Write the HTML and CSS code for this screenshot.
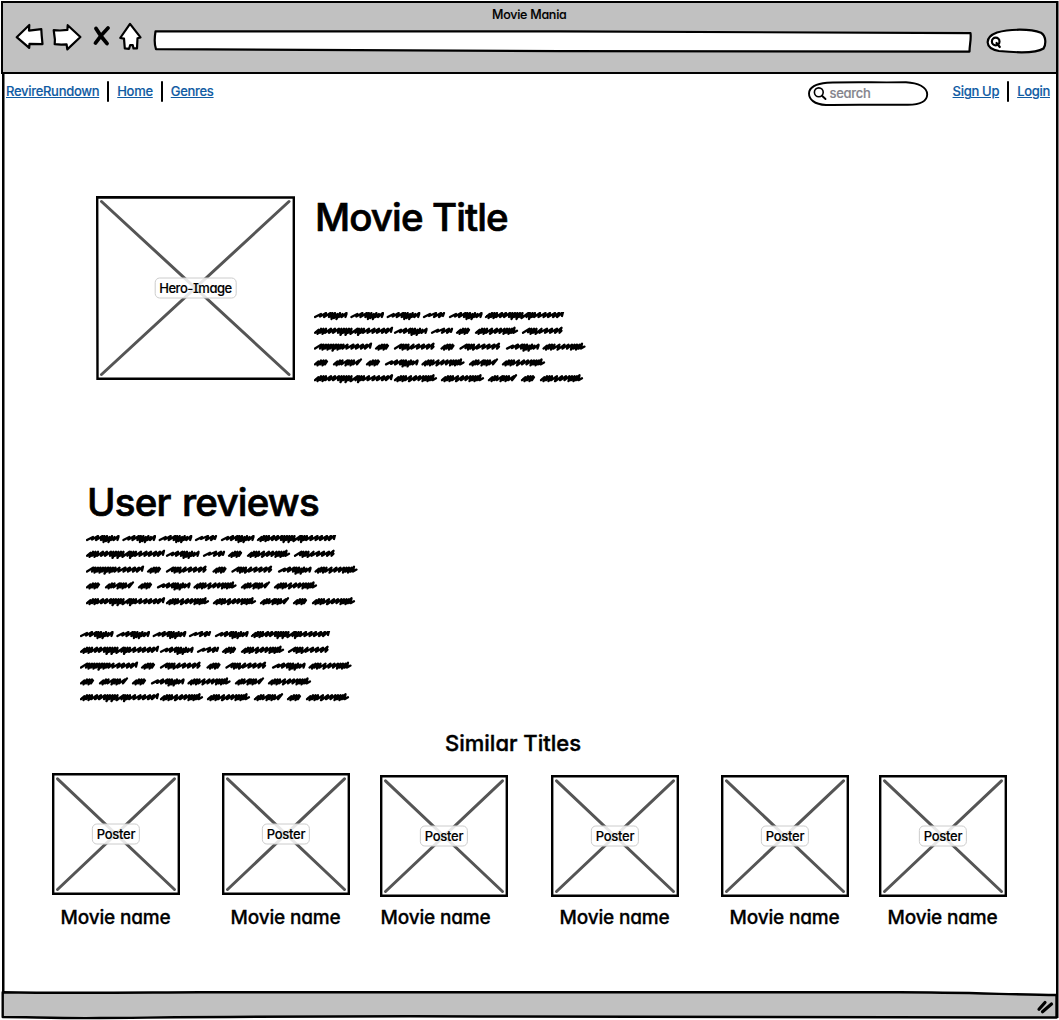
FILE: index.html
```html
<!DOCTYPE html>
<html lang="en">
<head>
<meta charset="utf-8">
<title>Movie Mania</title>
<link rel="stylesheet" href="styles.css">
</head>
<body>
<svg class="defs" width="0" height="0" aria-hidden="true">
  <defs>
    <path id="w14" d="M1 5l3.500-3-1 4 3.500-5-1 4 3.500-4-1 5 3.500-5-1 4 2-3M2 4h8"/>
    <path id="w21" d="M1 5l6-3-1 2 7-3-2 4 7-4-2 4 4-3 1-1-1 3"/>
    <path id="w28" d="M1 5l3.500-3-1 4 3.500-5-1 4 3.500-4-1 4 6-4-2 5 3.500-5-1 4 3.500-4-1 5 3.500-5-1 4 6-4-2 4 4-5M2 4h6M13 4h7"/>
    <path id="w32" d="M1 5l6-3-1 2.500 6-3.500-2 4 6.500-4-1.500 4 3.500-4-1 6 3.500-6-1 5 3.500-4-1 5 3.500-6-1 4 3.500-3-1 3 5-4-1 4 1-3M15 4.500h9"/>
    <path id="w42" d="M1 5l3.500-3-1 4 3.500-5-1 4 3.500-4-1 5 3.500-5-1 4 6-4-2 5 7-5-2 4 6-4-1.500 4 5-4-1 5 3.500-5-1 4 3.500-4-1 5 3.500-5-1 4 3.500-5-1 5 3.500-2M2 4h8M29 4.500h9"/>
    <path id="w42b" d="M1 5l6.500-4-1.500 3.500 3.500-3.500-1 5 3.500-5-1 4 3.500-4-1 5 6-5-2 4 7.500-4-2 4 7-4-2 4 7-4-2 4 6.500-5-2 5 2-2M8 4h7"/>
    <path id="w56" d="M1 5l6.500-4-1.500 4 3.500-4-1 5 3.500-5-1 4 3.500-4-1 5 3.500-5-1 4 3.500-4-1 6 3.500-6-1 4 3.500-4-1 5 3.500-5-1 4 3.500-4-1 4 5-4-1 4 7-4-2 4 6.500-4-2 4 7-4-2 4 6-4-2 4 6-5-1 4M8 4h20"/>
    <path id="w75" d="M1 5l3.500-3-1 4 3.500-5-1 4 3.500-4-1 5 3.500-5-1 4 6-4-2 4 6-4-2 4 6-4-1 4 3.500-4-1 6 3.500-6-1 4 3.500-4-1 6 3.500-6-1 4 3.500-4-1 5 7-5-2 4 3.500-4-1 6 3.500-6-1 4 3.500-4-1 4 6-4-1.500 4 7-4-2 4 6.500-4-2 4 7-4-2 4 6-4-2 4 6-5-1 4M2 4h8M24 4.500h14M44 4.500h6"/>
    <symbol id="scribble" viewBox="0 0 274 74">
      <g fill="none" stroke="#000" stroke-width="2.300" stroke-linecap="round" stroke-linejoin="round">
        <use href="#w32" x="0"/><use href="#w32" x="36.400"/><use href="#w32" x="72.700"/><use href="#w21" x="109"/><use href="#w32" x="135"/><use href="#w75" x="171"/>
        <g transform="translate(0 15.800)"><use href="#w75"/><use href="#w32" x="80"/><use href="#w21" x="117"/><use href="#w14" x="142"/><use href="#w42" x="161"/><use href="#w42b" x="208"/></g>
        <g transform="translate(0 31.600)"><use href="#w56"/><use href="#w14" x="61"/><use href="#w42b" x="80"/><use href="#w14" x="126.500"/><use href="#w42b" x="145.500"/><use href="#w32" x="192"/><use href="#w42" x="228.500"/></g>
        <g transform="translate(0 47.400)"><use href="#w14"/><use href="#w28" x="19"/><use href="#w14" x="52"/><use href="#w32" x="71"/><use href="#w42" x="107.500"/><use href="#w28" x="155"/><use href="#w42" x="188"/></g>
        <g transform="translate(0 63.200)"><use href="#w75"/><use href="#w42" x="80"/><use href="#w42" x="127"/><use href="#w28" x="174"/><use href="#w14" x="207"/><use href="#w42" x="226"/></g>
      </g>
    </symbol>
    <symbol id="poster" viewBox="0 0 128 122">
      <path d="M1.200 1.200H126.800V120.800H1.200Z" fill="#fff" stroke="#000" stroke-width="2.400"/>
      <path d="M5.500 5.800L122.500 116.500M122.500 5.800L5.500 116.500" stroke="#555" stroke-width="3" stroke-linecap="round"/>
    </symbol>
  </defs>
</svg>

<div class="window">
  <header class="chrome">
    <div class="window-title">Movie Mania</div>
    <div class="toolbar">
      <svg class="ink back" width="32" height="30" viewBox="14 22 32 30"><path d="M16.700 37.200L29.300 25l-.3 5.600 12.300-1.400.4 6.300.8 8.600-13-.3-.3 4.100z"/></svg>
      <svg class="ink forward" width="34" height="30" viewBox="50 22 34 30"><path d="M53.700 30.200l6.200.3 7.500-.6.3-4.700L80.400 37 67.300 49.400l-.7-5-5.300.2-6.600-.4.200-4.700z"/></svg>
      <svg class="stop" width="20" height="24" viewBox="92 24 20 24"><path d="M96 28.500Q101 37 107 43.500M108 28Q101 35 95.500 43" fill="none" stroke="#000" stroke-width="3.800" stroke-linecap="round"/></svg>
      <svg class="ink home" width="26" height="32" viewBox="117 21 26 32"><path d="M130 23.800l10.500 13.600-3 .8-.5 10.200h-3.500l-.7-3.200h-2.700l-1 3.600-4.300-.4-.8-9.800-3.800-.6z"/></svg>
      <svg class="ink url" width="822" height="28" viewBox="152 27 822 28"><path d="M155.500 31.400L560 31.300 970.500 33.200C971.400 39 969.500 45 969.500 51.600L560 51.100 156 49.200C153.800 43 154.600 37 155.500 31.400z"/></svg>
      <svg class="ink find" width="64" height="28" viewBox="985 27 64 28"><path d="M997 32.500C1009 29 1030 28.500 1041 32.700 1046.500 36 1046 45 1043.500 48.500 1036 53.500 1014 52.500 999 51 984 48.500 984.500 37 997 32.500z"/><circle cx="995.700" cy="41.500" r="3.800"/><path d="M996.500 43l3.300 4"/></svg>
    </div>
  </header>

  <nav class="nav">
    <a>RevireRundown</a><i class="bar"></i><a>Home</a><i class="bar"></i><a>Genres</a>
    <div class="search">
      <svg width="122" height="26" viewBox="807 81 122 26"><path d="M827 82.700C850 81.700 880 82.700 906 82.200 918 82.800 927.200 87 927.200 94.500 927 101 920 104.700 908 104.700 880 105 850 104.500 826 105 814 104.500 809 99 809 93.500 809 87.500 816 83.500 827 82.700z" fill="#fff" stroke="#000" stroke-width="1.900"/><circle cx="818.800" cy="92.300" r="4.400" fill="none" stroke="#000" stroke-width="1.600"/><path d="M822 95.700l3.500 3.300" stroke="#000" stroke-width="1.900" stroke-linecap="round"/></svg>
      <span>search</span>
    </div>
    <a>Sign Up</a><i class="bar"></i><a>Login</a>
  </nav>

  <main>
    <section class="hero">
      <div class="hero-image">
        <svg width="199" height="184" viewBox="0 0 199 184"><path d="M1.200 1.200L197.800 1.500V182.800H1.500Z" fill="#fff" stroke="#000" stroke-width="2.400"/><path d="M5.500 5.500L193 178.500M193 5.500L5.500 178.500" stroke="#555" stroke-width="3" stroke-linecap="round"/></svg>
        <span class="tag">Hero-Image</span>
      </div>
      <div class="summary">
        <h1 class="t1">Movie Title</h1>
        <svg width="274" height="74"><use href="#scribble"/></svg>
      </div>
    </section>

    <section class="reviews">
      <h1 class="t2">User reviews</h1>
      <svg width="274" height="74"><use href="#scribble"/></svg>
      <svg class="second" width="274" height="74"><use href="#scribble"/></svg>
    </section>

    <section class="similar">
      <h2>Similar Titles</h2>
      <div class="posters">
        <figure class="raised"><div class="thumb"><svg width="128" height="122"><use href="#poster"/></svg><span class="tag">Poster</span></div><figcaption>Movie name</figcaption></figure>
        <figure class="raised"><div class="thumb"><svg width="128" height="122"><use href="#poster"/></svg><span class="tag">Poster</span></div><figcaption>Movie name</figcaption></figure>
        <figure class="flush"><div class="thumb"><svg width="128" height="122"><use href="#poster"/></svg><span class="tag">Poster</span></div><figcaption>Movie name</figcaption></figure>
        <figure><div class="thumb"><svg width="128" height="122"><use href="#poster"/></svg><span class="tag">Poster</span></div><figcaption>Movie name</figcaption></figure>
        <figure><div class="thumb"><svg width="128" height="122"><use href="#poster"/></svg><span class="tag">Poster</span></div><figcaption>Movie name</figcaption></figure>
        <figure><div class="thumb"><svg width="128" height="122"><use href="#poster"/></svg><span class="tag">Poster</span></div><figcaption>Movie name</figcaption></figure>
      </div>
    </section>
  </main>

  <footer>
    <svg width="1059" height="32" viewBox="0 988 1059 32"><path d="M2.700 992.300C70 993.500 140 992.500 200 992.300L900 992.300C960 992.300 1010 994.500 1056.500 995V1017.500C900 1018.500 700 1017.500 500 1016.500 330 1015.500 170 1017.500 100 1018 60 1018.500 30 1017 2.700 1017z" fill="#c1c1c1" stroke="#000" stroke-width="2.400" stroke-linejoin="round"/><path d="M1039 1009.300l6-6.800M1042.500 1011.700l9-7.700" stroke="#000" stroke-width="3.200" stroke-linecap="round"/></svg>
  </footer>
</div>
</body>
</html>
```
FILE: styles.css
```css
* { box-sizing: border-box; }
body {
  margin: 0;
  background: #fff;
  color: #000;
  font-family: Inter, "Liberation Sans", sans-serif;
  font-weight: 500;
  font-feature-settings: "cv11", "cv08";
  -webkit-text-stroke: .15px currentColor;
}
svg { display: block; flex: none; }
.defs { position: absolute; }
h1, h2, figure { margin: 0; font-weight: 500; }

.window {
  width: 1059px;
  height: 1020px;
  display: flex;
  flex-direction: column;
  background:
    linear-gradient(#000, #000) 1.5px 1px / 2.5px 1017px no-repeat,
    linear-gradient(#000, #000) 1055.5px 1px / 2.5px 1017px no-repeat,
    #fff;
}
.chrome {
  height: 73px;
  margin: 1px 1px 0 1px;
  border: 2.5px solid #000;
  background: #c1c1c1;
}
.window-title {
  height: 18px;
  padding: 4px 0 0 489px;
  font-size: 12.5px;
  line-height: 15px;
  letter-spacing: -.25px;
  white-space: nowrap;
}
.toolbar { display: flex; align-items: flex-start; padding-left: 11px; }
.ink { fill: #fff; stroke: #000; stroke-width: 2.2; stroke-linejoin: round; stroke-linecap: round; }
.back { margin-top: 1px; }
.forward { margin: 1px 0 0 4px; }
.stop { margin: 3px 0 0 8px; }
.home { margin-left: 5px; }
.url { margin: 6px 0 0 9px; }
.find { margin: 6px 0 0 11px; }

.nav {
  height: 40px;
  display: flex;
  align-items: flex-start;
  padding: 7px 9px 0 6px;
  font-size: 13px;
  line-height: 21px;
  letter-spacing: -.3px;
  white-space: nowrap;
}
.nav a { color: #0f5ba3; text-decoration: underline; text-underline-offset: 1px; text-decoration-thickness: 1px; }
.bar { width: 2px; height: 21px; margin: 0 8px; background: #000; border-radius: 1px; }
.search { position: relative; margin: 0 24px 0 auto; color: #84848c; }
.search span { position: absolute; left: 23px; top: 2px; }

.hero { display: flex; padding: 82px 0 0 96px; height: 271px; }
.hero-image, .thumb { position: relative; display: grid; place-items: center; align-content: start; }
.hero-image { height: 184px; }
.tag {
  position: absolute;
  left: 50%;
  top: 50%;
  transform: translate(-50%, -50%);
  padding: 0 4px 1px;
  border: 1px solid #ccc;
  border-radius: 5px;
  background: rgba(255, 255, 255, .86);
  font-size: 13px;
  line-height: 18px;
  letter-spacing: -.45px;
  white-space: nowrap;
}
.thumb .tag { letter-spacing: -.3px; }
.summary { padding-left: 19px; }
.t1, .t2 {
  font-size: 38.5px;
  line-height: 46px;
  white-space: nowrap;
  -webkit-text-stroke: .7px currentColor;
}
.t1 { padding-left: 1px; margin: -2px 0 72px; letter-spacing: -.9px; }
.t2 { padding-left: 1px; margin: -1px 0 10px; letter-spacing: -.8px; word-spacing: 2px; }
.reviews { padding: 95px 0 0 86px; height: 344px; }
.second { margin: 22px 0 0 -6px; }

.similar h2 { padding-left: 445px; font-size: 22px; line-height: 28px; white-space: nowrap; -webkit-text-stroke: .4px currentColor; }
.posters { display: flex; padding: 18px 0 0 52px; }
figure { width: 128px; margin-right: 42px; }
figure:nth-child(2), figure:nth-child(5) { margin-right: 30px; }
figure:nth-child(3) { margin-right: 43px; }
.raised .thumb { top: -2px; }
figcaption { padding: 8px 0 0 8.5px; font-size: 19px; line-height: 26px; letter-spacing: -.15px; white-space: nowrap; -webkit-text-stroke: .3px currentColor; }
.flush figcaption { padding-left: .5px; }

footer { margin-top: auto; }
```
